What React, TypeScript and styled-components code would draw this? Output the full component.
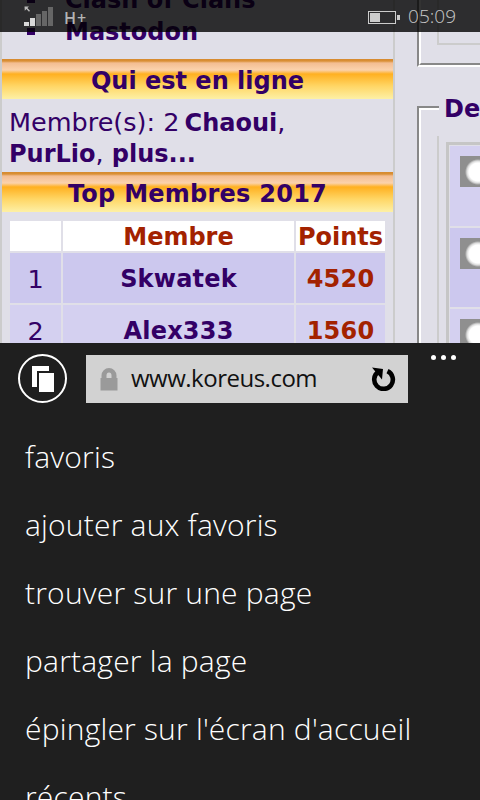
import React from "react";
import styled, { createGlobalStyle } from "styled-components";

const PURPLE = "#330066";
const RED = "#a32200";
const PAGE = "#e0dfe8";

const MEMBERS = [
  { rank: 1, name: "Skwatek", points: 4520 },
  { rank: 2, name: "Alex333", points: 1560 },
];

const MENU = [
  "favoris",
  "ajouter aux favoris",
  "trouver sur une page",
  "partager la page",
  "épingler sur l'écran d'accueil",
  "récents",
];

const SIGNAL = [
  { x: 0, h: 4, on: true },
  { x: 6, h: 8, on: true },
  { x: 12, h: 12, on: false },
  { x: 18, h: 15, on: false },
  { x: 24, h: 19, on: false },
];

const App = () => {
  return (
    <>
      <GlobalStyle />
      <Screen>
        <Viewport>
          <StatusBar>
            <Network>
              <svg width="30" height="20" viewBox="0 0 30 20">
                <path d="M0.5 0.5h4.5l-1.6 1.6 2.6 2.6-1 1-2.6-2.6-1.6 1.6z" fill="#bbb" />
                {SIGNAL.map((bar) => (
                  <rect
                    key={bar.x}
                    x={bar.x}
                    y={20 - bar.h}
                    width="5"
                    height={bar.h}
                    fill={bar.on ? "#d8d8d8" : "#666"}
                  />
                ))}
              </svg>
              <NetworkLabel>H+</NetworkLabel>
            </Network>
            <Clock>
              <Battery width="33" height="14" viewBox="0 0 33 14">
                <rect x="0.5" y="0.5" width="27" height="12" fill="none" stroke="#ccc" />
                <rect x="2" y="2" width="10" height="9" fill="#ccc" />
                <rect x="29" y="4" width="3" height="5" fill="#ccc" />
              </Battery>
              <Time>05:09</Time>
            </Clock>
          </StatusBar>

          <Page>
            <Sidebar>
              <LinkList>
                <LinkItem>Clash of Clans</LinkItem>
                <LinkItem>Mastodon</LinkItem>
              </LinkList>

              <BlockTitle>Qui est en ligne</BlockTitle>
              <Online>
                Membre(s): 2 <b>Chaoui</b>,
                <br />
                <b>PurLio</b>, <b>plus...</b>
              </Online>

              <BlockTitle $wide>Top Membres 2017</BlockTitle>
              <Ranking>
                <RankRow>
                  <HeadCell />
                  <HeadCell>Membre</HeadCell>
                  <HeadCell>Points</HeadCell>
                </RankRow>
                {MEMBERS.map((m) => (
                  <RankRow key={m.rank}>
                    <RankCell $even={m.rank % 2 === 0}>{m.rank}</RankCell>
                    <RankCell $even={m.rank % 2 === 0} $bold>
                      {m.name}
                    </RankCell>
                    <RankCell $even={m.rank % 2 === 0} $bold $red>
                      {m.points}
                    </RankCell>
                  </RankRow>
                ))}
              </Ranking>
            </Sidebar>

            <Aside>
              <Groove $top={-20} $height={87}>
                <GrooveInner>
                  <TopPanel />
                </GrooveInner>
              </Groove>

              <Groove $top={39} $height={300}>
                <Legend>Derniers</Legend>
                <GrooveInner>
                  <Panel>
                    <Thumbs>
                      <ThumbCell $height={80}>
                        <Thumb />
                      </ThumbCell>
                      <ThumbCell $height={79} $alt>
                        <Thumb />
                      </ThumbCell>
                      <ThumbCell $height={79}>
                        <Thumb />
                      </ThumbCell>
                    </Thumbs>
                  </Panel>
                </GrooveInner>
              </Groove>
            </Aside>
          </Page>
        </Viewport>

        <Browser>
          <AddressRow>
            <TabsButton>
              <svg width="22" height="26" viewBox="0 0 22 26">
                <path d="M0 0h17v5H5v16H0z" fill="#fff" />
                <rect x="7" y="7" width="15" height="19" fill="#fff" />
              </svg>
            </TabsButton>
            <AddressBar>
              <svg width="18" height="23" viewBox="0 0 18 23">
                <path
                  d="M1.5 10V7.5a7.5 7.5 0 0 1 15 0V10h-5V7.5a2.5 3 0 0 0-5 0V10z"
                  fill="#9a9a9a"
                />
                <rect x="0.5" y="10" width="17" height="12.5" fill="#9a9a9a" />
              </svg>
              <Url>www.koreus.com</Url>
              <Reload>
                <svg width="25" height="24" viewBox="0 0 25 24">
                  <path
                    d="M16.5 4.2a9.3 9.3 0 1 1-9 0.6"
                    fill="none"
                    stroke="#000"
                    strokeWidth="4.6"
                  />
                  <path d="M1 0.5l11 1.5-1 10.5z" fill="#000" />
                </svg>
              </Reload>
            </AddressBar>
            <Dots>
              <Dot />
              <Dot />
              <Dot />
            </Dots>
          </AddressRow>

          <Menu>
            {MENU.map((label) => (
              <MenuItem key={label}>{label}</MenuItem>
            ))}
          </Menu>
        </Browser>
      </Screen>
    </>
  );
};

const GlobalStyle = createGlobalStyle`
  html, body {
    margin: 0;
    padding: 0;
    background: #1f1f1f;
  }
`;

const Screen = styled.div`
  width: 480px;
  height: 800px;
  overflow: hidden;
`;

const Viewport = styled.div`
  position: relative;
  height: 343px;
  overflow: hidden;
  background: ${PAGE};
  font-family: "DejaVu Sans", sans-serif;
  color: ${PURPLE};
`;

const StatusBar = styled.div`
  position: absolute;
  top: 0;
  left: 0;
  right: 0;
  height: 32px;
  z-index: 5;
  display: flex;
  align-items: center;
  justify-content: space-between;
  padding: 0 24px;
  background: rgba(0, 0, 0, 0.8);
  font-family: "Open Sans", sans-serif;
  color: #c8c8c8;
`;

const Network = styled.div`
  display: flex;
  align-items: flex-end;
  gap: 10px;
  height: 20px;
`;

const NetworkLabel = styled.span`
  font-size: 16px;
  line-height: 16px;
  font-weight: 600;
  letter-spacing: 1px;
  color: #b4b4b4;
`;

const Clock = styled.div`
  display: flex;
  align-items: center;
  gap: 7px;
`;

const Battery = styled.svg`
  margin-top: 4px;
`;

const Time = styled.span`
  font-size: 19px;
  font-weight: 300;
  line-height: 32px;
`;

const Page = styled.div`
  display: flex;
  align-items: flex-start;
  width: 480px;
`;

const Sidebar = styled.div`
  flex: none;
  width: 391px;
  height: 343px;
  border-left: 2px solid #cccccc;
  border-right: 2px solid #cccccc;
`;

const LinkList = styled.ul`
  list-style: none;
  margin: -16px 0 11px;
  padding: 0 0 0 63px;
`;

const LinkItem = styled.li`
  position: relative;
  font-size: 24px;
  font-weight: 700;
  line-height: 32px;

  &::before {
    content: "";
    position: absolute;
    left: -38px;
    top: 12px;
    width: 8px;
    height: 7px;
    background: ${PURPLE};
  }
`;

const BlockTitle = styled.div<{ $wide?: boolean }>`
  height: 40px;
  line-height: 44px;
  text-align: center;
  font-size: 24px;
  font-weight: 700;
  letter-spacing: ${(p) => (p.$wide ? "0.25px" : "0")};
  background: linear-gradient(
    #d68a2f 0,
    #d98f35 2px,
    #f3bd92 4px,
    #fbd2ac 11px,
    #ffb020 15px,
    #ffd665 27px,
    #fdf0a6 40px
  );
`;

const Online = styled.div`
  height: 73px;
  box-sizing: border-box;
  padding: 8px 7px 0;
  font-size: 25.5px;
  line-height: 30px;

  b {
    font-size: 24px;
  }

  b:first-of-type {
    margin-left: -3px;
  }
`;

const Ranking = styled.div`
  display: flex;
  flex-direction: column;
  gap: 2px;
  padding: 9px 8px 0;
`;

const RankRow = styled.div`
  display: grid;
  grid-template-columns: 51px 231px 89px;
  column-gap: 2px;
`;

const HeadCell = styled.div`
  height: 30px;
  line-height: 32px;
  text-align: center;
  background: #fff;
  color: ${RED};
  font-size: 24px;
  font-weight: 700;
`;

const RankCell = styled.div<{ $even?: boolean; $bold?: boolean; $red?: boolean }>`
  height: 50px;
  line-height: 52px;
  text-align: center;
  font-size: ${(p) => (p.$bold ? "24px" : "25.5px")};
  font-weight: ${(p) => (p.$bold ? 700 : 400)};
  letter-spacing: ${(p) => (p.$bold ? "0.2px" : "0")};
  color: ${(p) => (p.$red ? RED : PURPLE)};
  background: ${(p) => (p.$even ? "#d4d0f0" : "#ccc8ee")};
`;

const Aside = styled.div`
  flex: none;
  width: 85px;
  padding-left: 22px;
  box-sizing: border-box;
`;

const Groove = styled.div<{ $top: number; $height: number }>`
  position: relative;
  box-sizing: border-box;
  width: 100px;
  height: ${(p) => p.$height}px;
  margin-top: ${(p) => p.$top}px;
  border-top: 2px solid #888;
  border-left: 2px solid #888;
  border-bottom: 2px solid #fff;
`;

const GrooveInner = styled.div`
  box-sizing: border-box;
  height: 100%;
  padding-left: 16px;
  border-top: 2px solid #fff;
  border-left: 2px solid #fff;
  border-bottom: 2px solid #888;
`;

const Legend = styled.div`
  position: absolute;
  top: -14px;
  left: 20px;
  padding: 0 5px;
  background: ${PAGE};
  font-size: 24px;
  font-weight: 700;
  line-height: 30px;
  white-space: nowrap;
`;

const TopPanel = styled.div`
  height: 59px;
  border-left: 2px solid #cccccc;
  border-bottom: 2px solid #cccccc;
`;

const Panel = styled.div`
  margin-top: 26px;
  padding: 6px 0 0 7px;
  border-left: 2px solid #cccccc;
`;

const Thumbs = styled.div`
  display: flex;
  flex-direction: column;
  gap: 2px;
  padding: 1px;
  border: 3px solid #c6c6c6;
`;

const ThumbCell = styled.div<{ $height: number; $alt?: boolean }>`
  box-sizing: border-box;
  height: ${(p) => p.$height}px;
  padding: 10px;
  background: ${(p) => (p.$alt ? "#ccc8ee" : "#d4d0f0")};
`;

const Thumb = styled.div`
  width: 36px;
  height: 31px;
  background: radial-gradient(circle at 18px 16px, #fff 0 9px, #dcdcdc 11px, #8f8f8f 13px);
`;

const Browser = styled.div`
  height: 457px;
  background: #1f1f1f;
  font-family: "Open Sans", sans-serif;
`;

const AddressRow = styled.div`
  position: relative;
  display: flex;
  align-items: flex-start;
  gap: 19px;
  padding: 11px 0 0 18px;
`;

const TabsButton = styled.div`
  flex: none;
  box-sizing: border-box;
  width: 49px;
  height: 49px;
  display: flex;
  align-items: center;
  justify-content: center;
  border: 2.5px solid #fff;
  border-radius: 50%;
`;

const AddressBar = styled.div`
  flex: none;
  box-sizing: border-box;
  width: 322px;
  height: 48px;
  margin-top: 1px;
  display: flex;
  align-items: center;
  padding: 0 12px 0 14px;
  background: #d2d2d2;
`;

const Url = styled.span`
  flex: 1;
  margin: -2px 0 0 13px;
  font-size: 24px;
  letter-spacing: -0.5px;
  line-height: 48px;
  color: #111;
`;

const Reload = styled.span`
  display: flex;
`;

const Dots = styled.div`
  position: absolute;
  top: 12px;
  left: 431px;
  display: flex;
  gap: 5px;
`;

const Dot = styled.span`
  width: 5px;
  height: 5px;
  border-radius: 50%;
  background: #fff;
`;

const Menu = styled.div`
  display: flex;
  flex-direction: column;
  padding: 20px 0 0 25px;
`;

const MenuItem = styled.div`
  height: 68px;
  line-height: 68px;
  font-size: 30px;
  font-weight: 300;
  letter-spacing: 0.2px;
  color: #fff;
  white-space: nowrap;
`;

export default App;
